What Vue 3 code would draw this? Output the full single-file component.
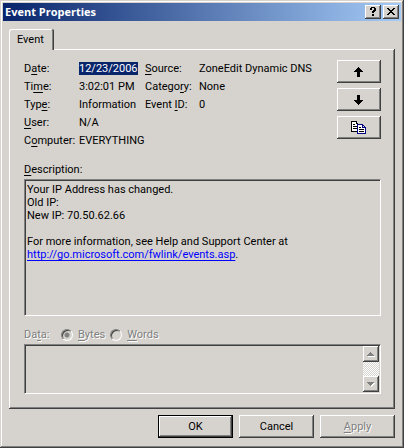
<script setup>
import { ref } from 'vue'

const format = ref('bytes')
</script>

<template>
  <main class="window">
    <header class="titlebar">
      <h1>Event Properties</h1>
      <button class="caption raised" type="button" aria-label="Help">
        <svg width="12" height="10" viewBox="0 0 12 10" shape-rendering="crispEdges">
          <path d="M4 0h4v1h1v3h-1v1h-1v1h-2v-2h1v-1h1v-2h-2v2h-2v-2h1zM5 7h2v2h-2z" />
        </svg>
      </button>
      <button class="caption raised" type="button" aria-label="Close">
        <svg width="12" height="10" viewBox="0 0 12 10" shape-rendering="crispEdges">
          <path d="M2 1h2v1h1v1h2v-1h1v-1h2v1h-1v1h-1v1h-1v1h1v1h1v1h1v1h-2v-1h-1v-1h-2v1h-1v1h-2v-1h1v-1h1v-1h1v-1h-1v-1h-1v-1h-1z" />
        </svg>
      </button>
    </header>

    <div class="content">
      <div class="tabs" role="tablist">
        <button class="tab" type="button" role="tab" aria-selected="true">Event</button>
      </div>

      <section class="panel" role="tabpanel">
        <div class="summary">
          <dl class="fields">
            <dt>D<u>a</u>te:</dt><dd><mark>12/23/2006</mark></dd>
            <dt><u>S</u>ource:</dt><dd>ZoneEdit Dynamic DNS</dd>
            <dt>Ti<u>m</u>e:</dt><dd>3:02:01 PM</dd>
            <dt>Catego<u>r</u>y:</dt><dd>None</dd>
            <dt>Typ<u>e</u>:</dt><dd>Information</dd>
            <dt>Event <u>I</u>D:</dt><dd>0</dd>
            <dt><u>U</u>ser:</dt><dd class="wide">N/A</dd>
            <dt>C<u>o</u>mputer:</dt><dd class="wide">EVERYTHING</dd>
          </dl>
          <div class="nav">
            <button class="raised" type="button" aria-label="Previous event">
              <svg width="10" height="10" viewBox="0 0 10 10" shape-rendering="crispEdges">
                <path d="M4 0h1v1h1v1h1v1h1v1h1v1h-3v5h-3v-5h-3v-1h1v-1h1v-1h1v-1h1z" />
              </svg>
            </button>
            <button class="raised" type="button" aria-label="Next event">
              <svg width="10" height="10" viewBox="0 0 10 10" shape-rendering="crispEdges">
                <path d="M3 0h3v5h3v1h-1v1h-1v1h-1v1h-1v1h-1v-1h-1v-1h-1v-1h-1v-1h-1v-1h3z" />
              </svg>
            </button>
            <button class="raised" type="button" aria-label="Copy event">
              <svg width="16" height="14" viewBox="0 0 16 14" shape-rendering="crispEdges">
                <path fill="#fff" d="M1 1h4v2h2v7h-6z" />
                <path d="M0 0h6v1h-5v9h5v1h-6zM5 1h1v1h1v1h-2zM2 3h2v1h-2zM2 5h4v1h-4zM2 7h4v1h-4z" />
                <path fill="#fff" d="M7 4h4v3h3v5h-7z" />
                <path fill="#000080" d="M6 3h6v1h1v1h1v1h1v7h-9zM7 4v8h7v-5h-3v-3zM12 5v1h1v-1z" fill-rule="evenodd" />
                <path d="M8 6h2v1h-2zM8 8h5v1h-5zM8 10h5v1h-5z" />
              </svg>
            </button>
          </div>
        </div>

        <p id="description" class="caption-text"><u>D</u>escription:</p>
        <div class="sunken description" role="document" aria-labelledby="description" tabindex="0">
          <p>Your IP Address has changed.<br />Old IP:<br />New IP: 70.50.62.66</p>
          <p>
            For more information, see Help and Support Center at<br />
            <a href="http://go.microsoft.com/fwlink/events.asp">http://go.microsoft.com/fwlink/events.asp</a>.
          </p>
        </div>

        <div class="format disabled">
          <label class="data-label" for="data">Da<u>t</u>a:</label>
          <input id="bytes" v-model="format" type="radio" name="format" value="bytes" disabled />
          <label for="bytes"><u>B</u>ytes</label>
          <input id="words" v-model="format" type="radio" name="format" value="words" disabled />
          <label for="words"><u>W</u>ords</label>
        </div>
        <div class="sunken data">
          <textarea id="data" disabled></textarea>
          <div class="scrollbar">
            <button class="raised" type="button" disabled aria-label="Scroll up">
              <svg width="8" height="5" viewBox="0 0 8 5" shape-rendering="crispEdges">
                <path fill="#fff" d="M1 4h7v1h-7z" />
                <path fill="#808080" d="M3 0h1v1h1v1h1v1h1v1h-7v-1h1v-1h1v-1h1z" />
              </svg>
            </button>
            <button class="raised" type="button" disabled aria-label="Scroll down">
              <svg width="8" height="5" viewBox="0 0 8 5" shape-rendering="crispEdges">
                <path fill="#fff" d="M7 1h1v1h-1v1h-1v1h-1v1h-1v-2z" />
                <path fill="#808080" d="M0 0h7v1h-1v1h-1v1h-1v1h-1v-1h-1v-1h-1v-1h-1z" />
              </svg>
            </button>
          </div>
        </div>
      </section>

      <footer class="actions">
        <button class="raised default" type="button">OK</button>
        <button class="raised" type="button">Cancel</button>
        <button class="raised disabled" type="button" disabled><span><u>A</u>pply</span></button>
      </footer>
    </div>
  </main>
</template>

<style>
body {
  background: #d6d3ce;
}
</style>

<style scoped>
* {
  box-sizing: border-box;
  margin: 0;
}

.window {
  display: flex;
  flex-direction: column;
  min-height: 100vh;
  padding: 3px;
  background: #d6d3ce;
  box-shadow: inset -1px -1px #404040, inset 1px 1px #d6d3ce, inset -2px -2px #808080, inset 2px 2px #fff;
  color: #000;
  font: 11px/13px Roboto, "Liberation Sans", Arial, sans-serif;
}

button {
  display: flex;
  align-items: center;
  justify-content: center;
  padding: 0;
  border: 0;
  background: #d6d3ce;
  color: inherit;
  font: inherit;
}

u,
a {
  text-decoration: underline 1px;
  text-decoration-skip-ink: none;
  text-underline-offset: 2px;
}

.raised {
  box-shadow: inset -1px -1px #404040, inset 1px 1px #fff, inset -2px -2px #808080;
}

.sunken {
  border: 1px solid;
  border-color: #808080 #fff #fff #808080;
  box-shadow: inset 1px 1px #404040;
}

.titlebar {
  display: flex;
  align-items: center;
  gap: 2px;
  height: 18px;
  padding: 0 2px;
  background: linear-gradient(to right, #08246b, #a5cbf7);
}

.titlebar h1 {
  flex: 1;
  color: #fff;
  font: bold 11px/16px "Open Sans", "Noto Sans", sans-serif;
}

.caption {
  width: 16px;
  height: 14px;
}

.content {
  display: flex;
  flex: 1;
  flex-direction: column;
  padding: 8px 6px 7px;
}

.tabs {
  display: flex;
}

.tab {
  z-index: 1;
  height: 21px;
  margin-bottom: -1px;
  padding: 0 10px 1px 8px;
  border-radius: 2px 2px 0 0;
  box-shadow: inset -1px 0 #404040, inset 1px 1px #fff, inset -2px 0 #808080;
}

.panel {
  display: flex;
  flex: 1;
  flex-direction: column;
  padding: 11px 14px 15px 15px;
  box-shadow: inset -1px -1px #404040, inset 1px 1px #fff, inset -2px -2px #808080;
}

.summary {
  display: flex;
  justify-content: space-between;
}

.fields {
  display: grid;
  grid-template-columns: 55px 66px 54px auto;
  grid-auto-rows: 18px;
  padding-top: 2px;
  white-space: nowrap;
}

.wide {
  grid-column: span 3;
}

mark {
  display: inline-block;
  background: #08246b;
  color: #fff;
}

.nav {
  display: flex;
  flex-direction: column;
  gap: 5px;
}

.nav button {
  width: 44px;
  height: 23px;
}

.caption-text {
  padding: 11px 0 3px;
}

.description {
  flex: 1;
  padding: 3px 2px;
}

.description p + p {
  margin-top: 13px;
}

a {
  color: #00f;
}

.disabled {
  color: #808080;
  text-shadow: 1px 1px #fff;
}

.format {
  display: flex;
  align-items: center;
  gap: 5px;
  padding: 12px 0 3px;
}

.data-label {
  width: 32px;
}

input {
  width: 12px;
  height: 12px;
  appearance: none;
  border: 1px solid;
  border-color: #808080 #fff #fff #808080;
  border-radius: 50%;
  box-shadow: inset 1px 1px #404040;
}

input:checked {
  background: radial-gradient(circle, #808080 2px, transparent 3px);
}

.data {
  display: flex;
  height: 50px;
  padding: 1px;
}

textarea {
  flex: 1;
  min-width: 0;
  border: 0;
  background: transparent;
  resize: none;
}

.scrollbar {
  display: flex;
  flex-direction: column;
  justify-content: space-between;
  width: 16px;
  background: repeating-conic-gradient(#fff 0 25%, #d6d3ce 0 50%) 0 0 / 2px 2px;
}

.scrollbar button {
  height: 16px;
}

.actions {
  display: flex;
  justify-content: flex-end;
  gap: 6px;
  padding-top: 6px;
}

.actions button {
  width: 75px;
  height: 23px;
}

.actions .default {
  border: 1px solid #000;
}
</style>
